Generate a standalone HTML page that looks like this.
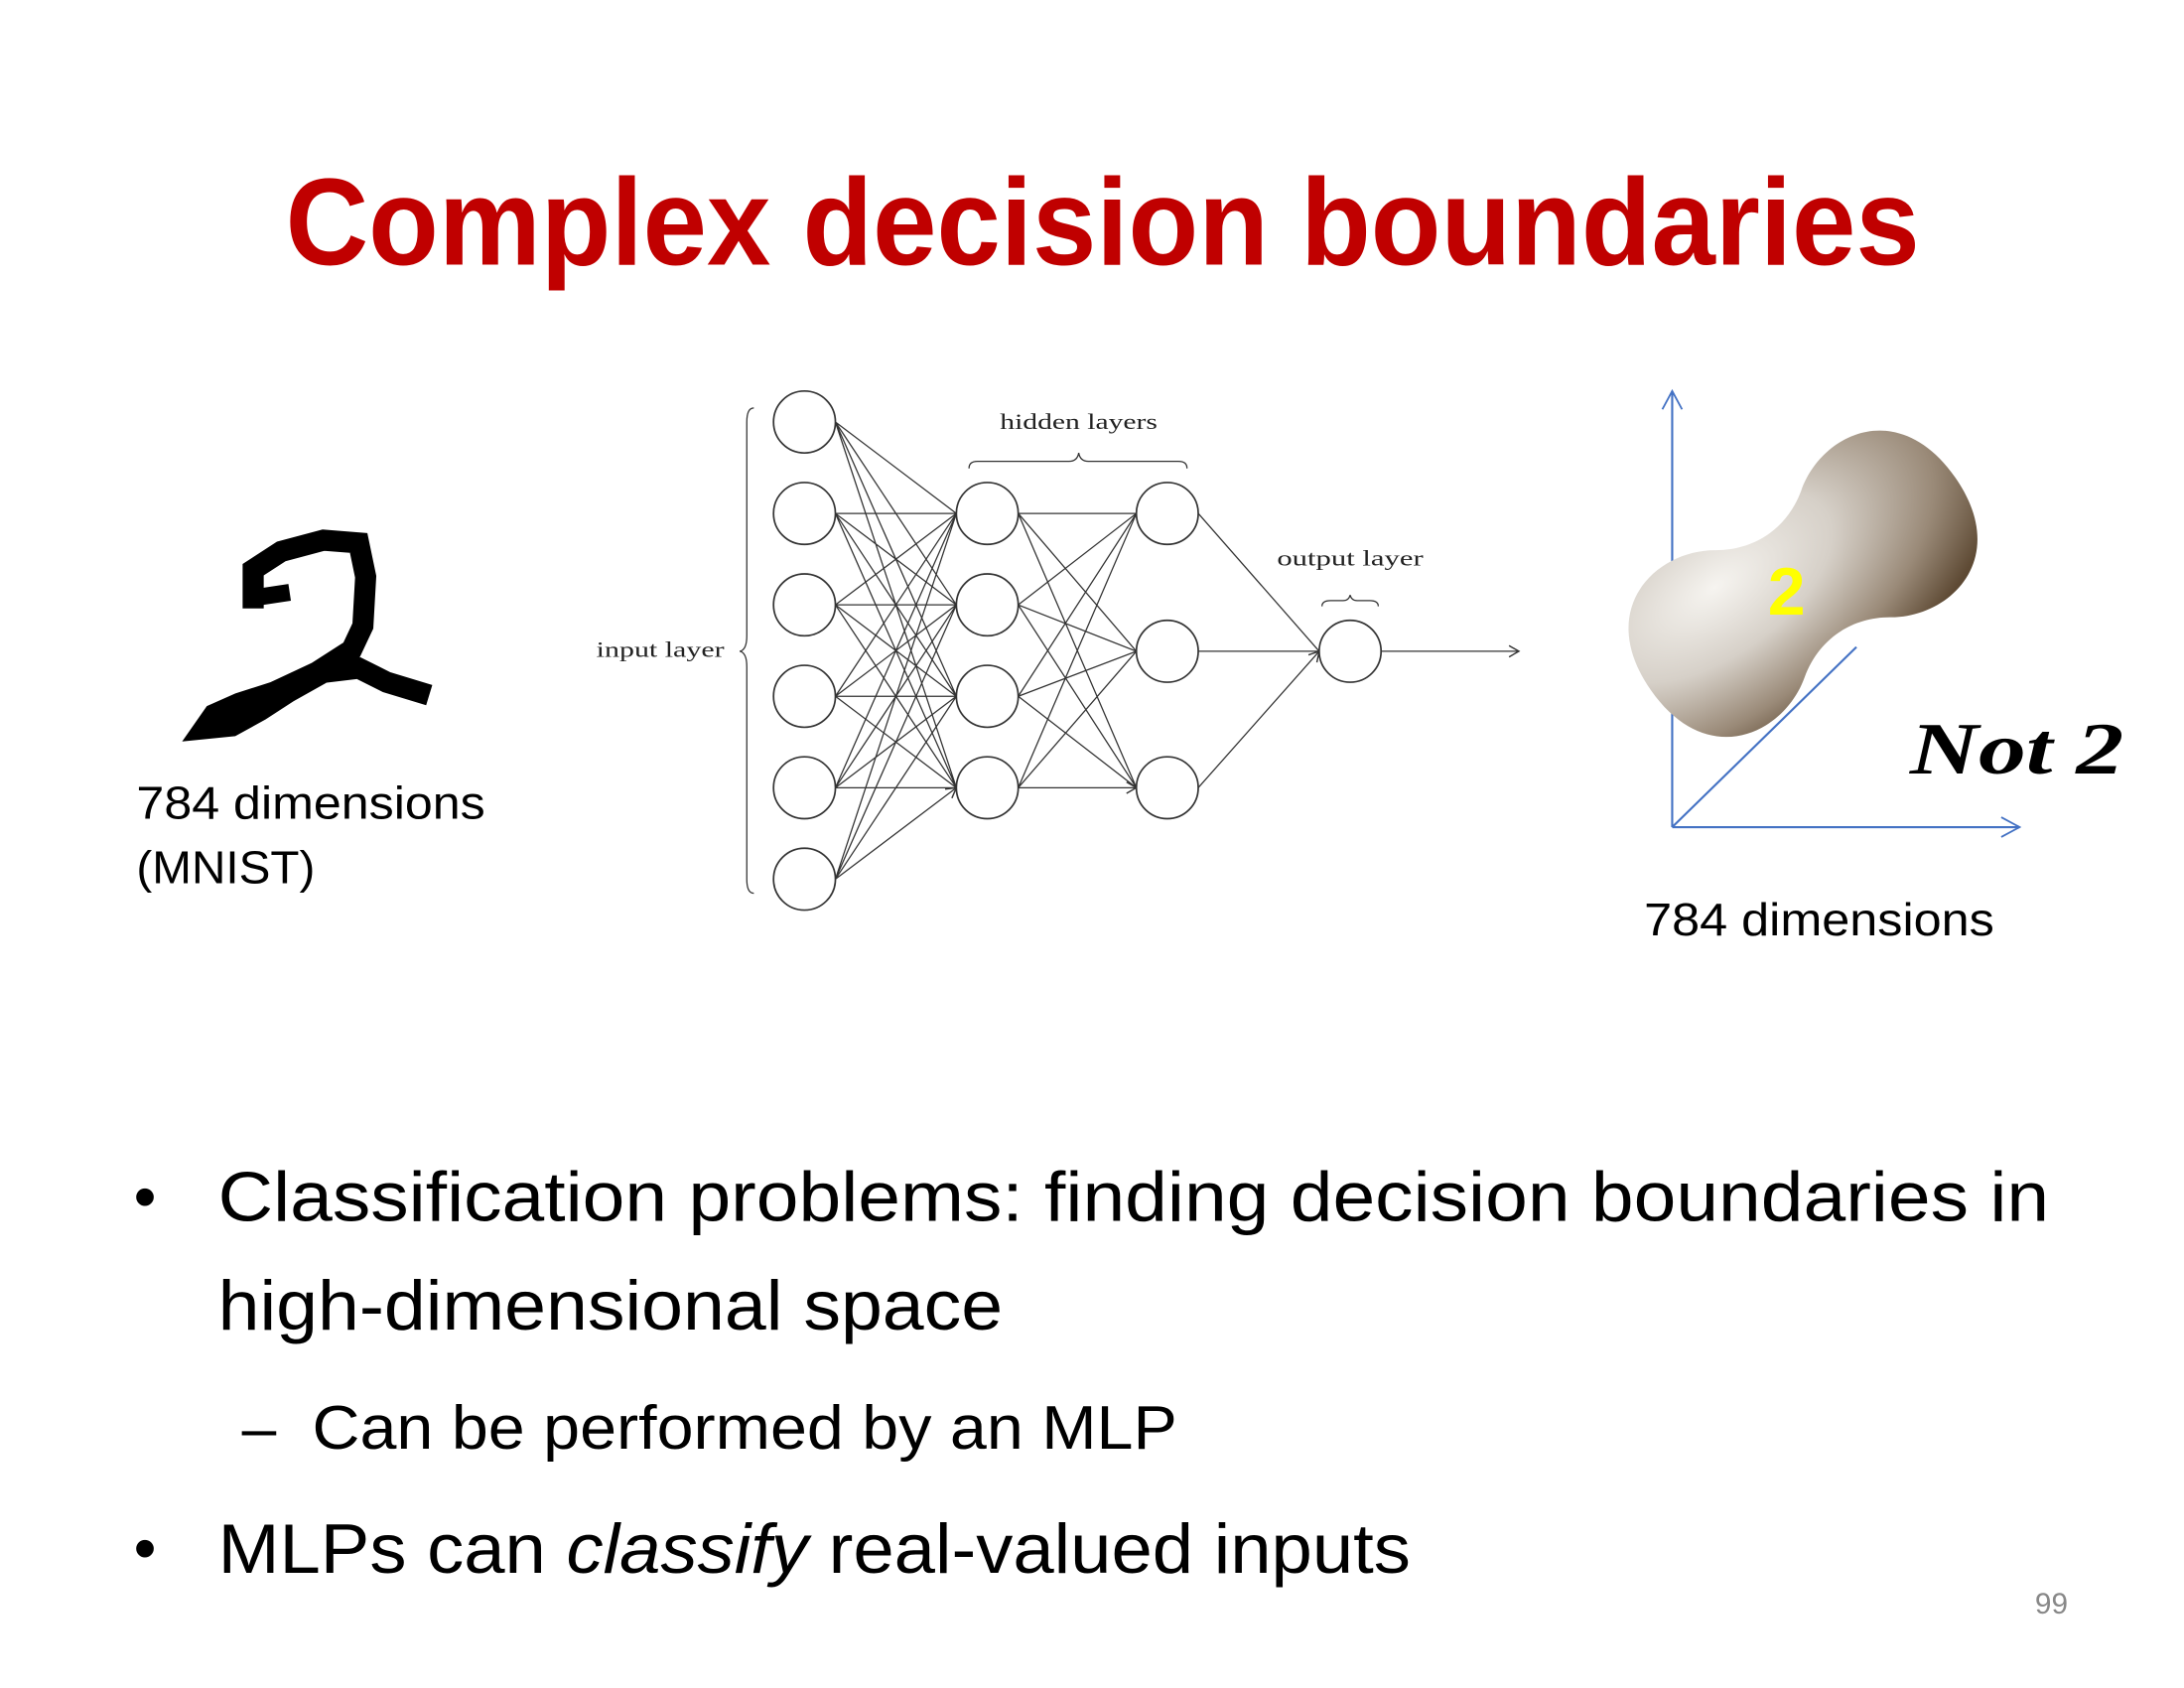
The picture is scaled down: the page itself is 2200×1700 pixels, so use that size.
<!DOCTYPE html>
<html><head><meta charset="utf-8"><style>html,body{margin:0;padding:0;background:#fff}svg{display:block}</style></head>
<body>
<svg width="2200" height="1700" viewBox="0 0 1552.9 1200" xmlns="http://www.w3.org/2000/svg">
<defs>
<radialGradient id="bg" cx="0.3" cy="0.25" r="0.9">
<stop offset="0" stop-color="#f6f4f0"/><stop offset="0.4" stop-color="#d6d0c8"/><stop offset="0.75" stop-color="#9a8a78"/><stop offset="1" stop-color="#5e4a34"/>
</radialGradient>
<marker id="ah" markerWidth="10" markerHeight="10" refX="8" refY="5" orient="auto" markerUnits="userSpaceOnUse"><path d="M1,1 L8,5 L1,9" fill="none" stroke="#333" stroke-width="1"/></marker>
<marker id="ab" markerWidth="16" markerHeight="16" refX="14" refY="8" orient="auto" markerUnits="userSpaceOnUse"><path d="M1,1 L14,8 L1,15" fill="none" stroke="#4472c4" stroke-width="1.3"/></marker>
</defs>
<text x="203" y="188" font-family="Liberation Sans, sans-serif" font-weight="bold" font-size="88" fill="#c00000" textLength="1162" lengthAdjust="spacingAndGlyphs">Complex decision boundaries</text>

<!-- MNIST digit -->
<g fill="none" stroke="#000" stroke-linejoin="miter" stroke-linecap="square">
<path d="M180,425 L180,405 L200,392 L230,384 L255,386 L260,410 L258,445 L250,462 L225,478 L195,492 L170,500 L152,508 L145,518 L165,516 L185,505 L205,492 L230,478 L255,475 L275,485 L298,492" stroke-width="15"/>
<path d="M180,425 L200,422" stroke-width="12"/>
</g>
<text x="97" y="582" font-family="Liberation Sans, sans-serif" font-size="33" fill="#000" textLength="248" lengthAdjust="spacingAndGlyphs">784 dimensions</text>
<text x="97" y="628" font-family="Liberation Sans, sans-serif" font-size="33" fill="#000" textLength="127" lengthAdjust="spacingAndGlyphs">(MNIST)</text>

<!-- network -->
<g stroke="#333" stroke-width="0.9" fill="none">
<path d="M594,300 L680,365 M594,300 L680,430 M594,300 L680,495 M594,300 L680,560
M594,365 L680,365 M594,365 L680,430 M594,365 L680,495 M594,365 L680,560
M594,430 L680,365 M594,430 L680,430 M594,430 L680,495 M594,430 L680,560
M594,495 L680,365 M594,495 L680,430 M594,495 L680,495 M594,495 L680,560
M594,560 L680,365 M594,560 L680,430 M594,560 L680,495 M594,560 L680,560
M594,625 L680,365 M594,625 L680,430 M594,625 L680,495 M594,625 L680,560" marker-end="url(#ah)"/>
<path d="M724,365 L808,365 M724,365 L808,463 M724,365 L808,560
M724,430 L808,365 M724,430 L808,463 M724,430 L808,560
M724,495 L808,365 M724,495 L808,463 M724,495 L808,560
M724,560 L808,365 M724,560 L808,463 M724,560 L808,560" marker-end="url(#ah)"/>
<path d="M852,365 L938,463 M852,463 L938,463 M852,560 L938,463" marker-end="url(#ah)"/>
<path d="M982,463 L1080,463" marker-end="url(#ah)"/>
<g fill="#fff" stroke="#333" stroke-width="1.2">
<circle cx="572" cy="300" r="22"/><circle cx="572" cy="365" r="22"/><circle cx="572" cy="430" r="22"/><circle cx="572" cy="495" r="22"/><circle cx="572" cy="560" r="22"/><circle cx="572" cy="625" r="22"/>
<circle cx="702" cy="365" r="22"/><circle cx="702" cy="430" r="22"/><circle cx="702" cy="495" r="22"/><circle cx="702" cy="560" r="22"/>
<circle cx="830" cy="365" r="22"/><circle cx="830" cy="463" r="22"/><circle cx="830" cy="560" r="22"/>
<circle cx="960" cy="463" r="22"/>
</g>
<path d="M536,290 Q531,290 531,300 L531,452 Q531,462 526,463 Q531,464 531,474 L531,625 Q531,635 536,635"/>
<path d="M689,333 Q689,328 695,328 L760,328 Q766,328 767,322 Q768,328 774,328 L838,328 Q844,328 844,333"/>
<path d="M940,431 Q940,427 946,427 L955,427 Q959,427 960,423 Q961,427 965,427 L974,427 Q980,427 980,431"/>
</g>
<g font-family="Liberation Serif, serif" font-size="16" fill="#222">
<text x="711" y="305" textLength="112" lengthAdjust="spacingAndGlyphs">hidden layers</text>
<text x="908" y="402" textLength="104" lengthAdjust="spacingAndGlyphs">output layer</text>
<text x="424" y="467" textLength="91" lengthAdjust="spacingAndGlyphs">input layer</text>
</g>

<!-- axes & blob -->
<g stroke="#4472c4" stroke-width="1.5" fill="none">
<path d="M1189,588 L1189,278" marker-end="url(#ab)"/>
<path d="M1189,588 L1436,588" marker-end="url(#ab)"/>
<path d="M1189,588 L1320,460"/>
</g>
<g transform="rotate(-35 1282 415)">
<path d="M1150,415 C1150,345 1210,335 1245,360 C1268,376 1296,376 1319,360 C1354,335 1414,345 1414,415 C1414,485 1354,495 1319,470 C1296,454 1268,454 1245,470 C1210,495 1150,485 1150,415 Z" fill="url(#bg)"/>
</g>
<text x="1257" y="437" font-family="Liberation Sans, sans-serif" font-weight="bold" font-size="48" fill="#ffff00">2</text>
<text x="1358" y="550" font-family="Liberation Serif, serif" font-weight="bold" font-style="italic" font-size="52" fill="#000" textLength="152" lengthAdjust="spacingAndGlyphs">Not 2</text>
<text x="1169" y="665" font-family="Liberation Sans, sans-serif" font-size="33" fill="#000" textLength="249" lengthAdjust="spacingAndGlyphs">784 dimensions</text>

<!-- bullets -->
<g font-family="Liberation Sans, sans-serif" fill="#000">
<text x="95" y="866" font-size="46">•</text>
<text x="155" y="868" font-size="50" textLength="1302" lengthAdjust="spacingAndGlyphs">Classification problems:  finding decision boundaries in</text>
<text x="155" y="945" font-size="50" textLength="558" lengthAdjust="spacingAndGlyphs">high-dimensional space</text>
<text x="172" y="1030" font-size="44">–</text>
<text x="222" y="1030" font-size="44" textLength="615" lengthAdjust="spacingAndGlyphs">Can be performed by an MLP</text>
<text x="95" y="1116" font-size="46">•</text>
<text x="155" y="1118" font-size="50" textLength="848" lengthAdjust="spacingAndGlyphs">MLPs can <tspan font-style="italic">classify</tspan> real-valued inputs</text>
<text x="1447" y="1147" font-size="21" fill="#888">99</text>
</g>
</svg>
</body></html>
